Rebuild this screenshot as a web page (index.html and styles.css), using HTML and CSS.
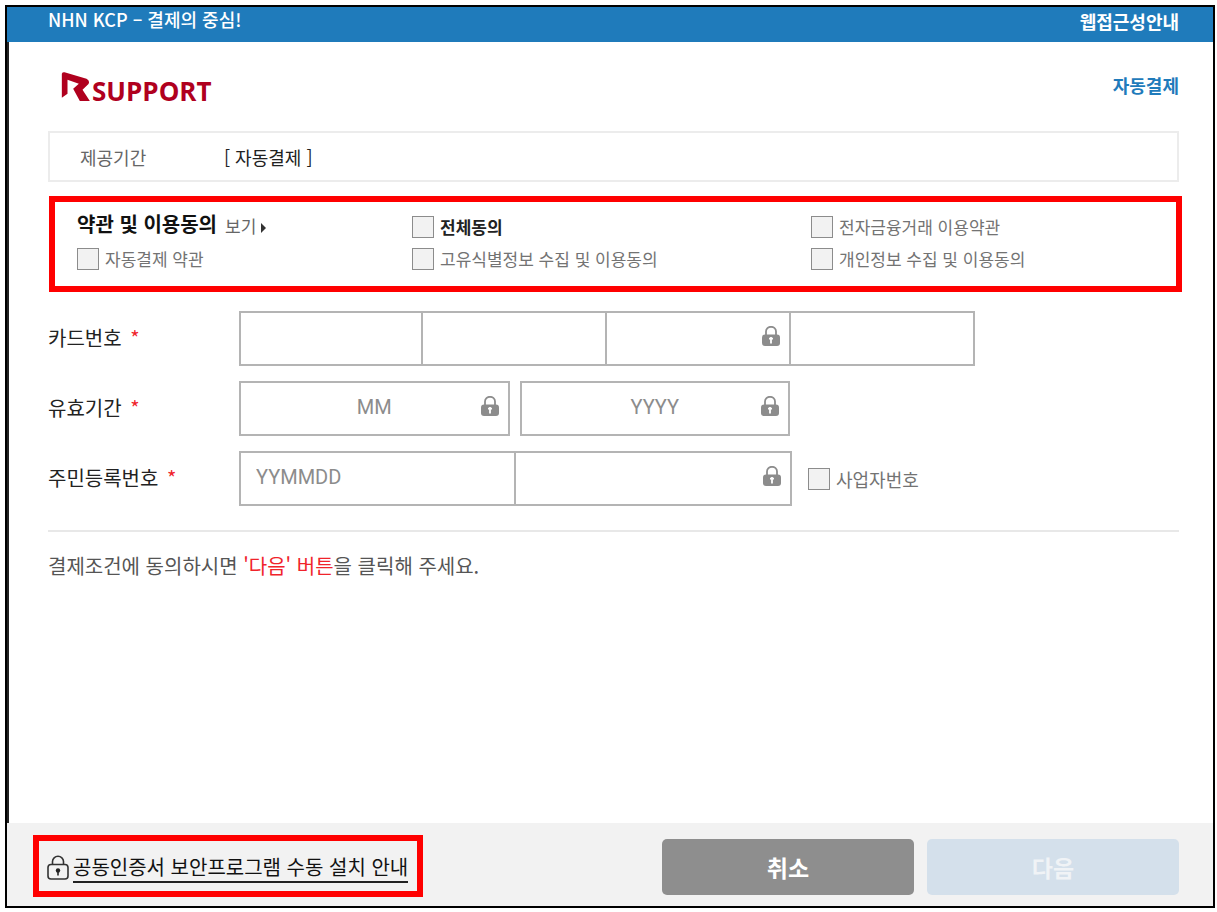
FILE: index.html
```html
<!DOCTYPE html>
<html lang="ko">
<head>
    <meta charset="UTF-8">
    <meta name="viewport" content="width=device-width, initial-scale=1.0">
    <title>NHN KCP - 결제의 중심!</title>
    <link rel="stylesheet" href="styles.css">
</head>
<body>
    <!-- Shared lock icon -->
    <svg class="sprite" aria-hidden="true">
        <symbol id="lock" viewBox="0 0 18 20">
            <path d="M4 10V5.5a5 4.7 0 0 1 10 0V10" fill="none" stroke="#8c8c8c" stroke-width="1.8"/>
            <rect x="0" y="8.5" width="18" height="11.5" rx="3" fill="#8c8c8c"/>
            <path d="M9 11v6.5M7 12.6h4" stroke="#fff" stroke-width="1.8"/>
        </symbol>
    </svg>

    <div class="window">
        <header class="topbar">
            <span class="brand">NHN KCP – 결제의 중심!</span>
            <a href="#" class="guide">웹접근성안내</a>
        </header>

        <main class="content">
            <div class="shop">
                <div class="logo">
                    <svg class="logo-mark" viewBox="0 0 86 87" aria-hidden="true">
                        <path d="M2 5Q4 0 10 1L76 20Q87 26 82 36L64 53L86 87H56L36 50L53 35L19 23V65L2 77Z" fill="#b0001e"/>
                    </svg>
                    <span>SUPPORT</span>
                </div>
                <strong class="pay-type">자동결제</strong>
            </div>

            <dl class="period">
                <dt>제공기간</dt>
                <dd>[ 자동결제 ]</dd>
            </dl>

            <form id="pay-form">
                <section class="terms">
                    <div class="terms-title">
                        <h2>약관 및 이용동의</h2>
                        <a href="#">보기<span class="arrow"></span></a>
                    </div>
                    <label class="check all"><input type="checkbox">전체동의</label>
                    <label class="check"><input type="checkbox">전자금융거래 이용약관</label>
                    <label class="check"><input type="checkbox">자동결제 약관</label>
                    <label class="check"><input type="checkbox">고유식별정보 수집 및 이용동의</label>
                    <label class="check"><input type="checkbox">개인정보 수집 및 이용동의</label>
                </section>

                <div class="row">
                    <label class="name" for="card1">카드번호 <em>*</em></label>
                    <div class="fields joined card">
                        <div class="field"><input type="text" id="card1"></div>
                        <div class="field"><input type="text" aria-label="카드번호 2"></div>
                        <div class="field">
                            <input type="password" aria-label="카드번호 3">
                            <svg class="lock"><use href="#lock"/></svg>
                        </div>
                        <div class="field"><input type="text" aria-label="카드번호 4"></div>
                    </div>
                </div>

                <div class="row">
                    <label class="name" for="month">유효기간 <em>*</em></label>
                    <div class="fields expiry">
                        <div class="field">
                            <input type="text" id="month" placeholder="MM">
                            <svg class="lock"><use href="#lock"/></svg>
                        </div>
                        <div class="field">
                            <input type="text" placeholder="YYYY" aria-label="유효기간 년">
                            <svg class="lock"><use href="#lock"/></svg>
                        </div>
                    </div>
                </div>

                <div class="row">
                    <label class="name" for="birth">주민등록번호 <em>*</em></label>
                    <div class="fields joined jumin">
                        <div class="field"><input type="text" id="birth" placeholder="YYMMDD"></div>
                        <div class="field">
                            <input type="password" aria-label="주민등록번호 뒷자리">
                            <svg class="lock"><use href="#lock"/></svg>
                        </div>
                    </div>
                    <label class="check biz"><input type="checkbox">사업자번호</label>
                </div>
            </form>

            <p class="notice">결제조건에 동의하시면 <em>'다음' 버튼</em>을 클릭해 주세요.</p>
        </main>

        <footer class="bottom">
            <div class="install">
                <svg class="install-lock" viewBox="0 0 22 26" aria-hidden="true">
                    <path d="M5.5 9.5V6.5a5.500 5.200 0 0 1 11 0v3" fill="none" stroke="#333" stroke-width="1.6"/>
                    <rect x="1" y="9.5" width="20" height="14.5" rx="3" fill="none" stroke="#333" stroke-width="1.6"/>
                    <circle cx="11" cy="15.500" r="2.200" fill="#222"/>
                    <path d="M11 15v5.500" stroke="#222" stroke-width="1.6"/>
                </svg>
                <a href="#">공동인증서 보안프로그램 수동 설치 안내</a>
            </div>
            <div class="buttons">
                <button type="button" class="cancel">취소</button>
                <button type="submit" form="pay-form" class="next" disabled>다음</button>
            </div>
        </footer>
    </div>
</body>
</html>
```
FILE: styles.css
```css
* {
    box-sizing: border-box;
}

body {
    margin: 0;
    padding: 5px 2px 4px 5px;
    min-height: 100vh;
    display: flex;
    background: #fff;
    color: #222;
    font-family: "Noto Sans CJK KR", sans-serif;
    font-size: 20px;
    line-height: 32px;
}

a {
    color: inherit;
    text-decoration: none;
}

em {
    font-style: normal;
    color: #f0232b;
}

input,
button {
    font-family: inherit;
}

.sprite {
    position: absolute;
    width: 0;
    height: 0;
}

.window {
    flex: 1;
    min-width: 0;
    display: flex;
    flex-direction: column;
    border: 2px solid #000;
}

/* Top */
.topbar {
    display: flex;
    justify-content: space-between;
    height: 35px;
    padding: 0 34px 0 41px;
    background: #1f7bbb;
    color: #fff;
    font-size: 18px;
    line-height: 24px;
}

.brand {
    font-weight: 500;
}

.guide {
    font-weight: 700;
    line-height: 28px;
}

.content {
    flex: 1;
    padding: 24px 34px 0 39px;
    border-left: 2px solid #222;
}

.shop {
    display: flex;
    justify-content: space-between;
    height: 65px;
    padding-left: 13px;
}

.logo {
    display: flex;
    align-items: flex-start;
    padding-top: 6px;
    color: #b0001e;
    font: 700 26px/38px "Open Sans", sans-serif;
}

.logo-mark {
    width: 29px;
    height: 29px;
    margin-right: 2px;
}

.pay-type {
    padding-top: 3px;
    color: #1f7bbb;
    font-size: 18px;
    font-weight: 700;
}

.period {
    display: flex;
    align-items: center;
    height: 51px;
    margin: 0 0 14px;
    padding-left: 30px;
    border: 2px solid #ececec;
    font-size: 18px;
}

.period dt {
    width: 144px;
    color: #666;
}

.period dd {
    margin: 0;
}

/* Terms */
.terms {
    display: grid;
    grid-template-columns: 335fr 399fr 365fr;
    grid-auto-rows: 32px;
    margin: 0 -3px 19px 1px;
    padding: 9px 0 11px 22px;
    border: 6px solid #f00;
}

.terms-title {
    display: flex;
    gap: 8px;
}

.terms-title h2 {
    margin: 0;
    color: #111;
    font-size: 20px;
    line-height: 26px;
    font-weight: 700;
}

.terms-title a {
    color: #666;
    font-size: 17px;
    line-height: 30px;
}

.arrow {
    display: inline-block;
    margin-left: 5px;
    border: 5px solid transparent;
    border-left: 5px solid #333;
    border-right: 0;
}

.check {
    display: flex;
    align-items: center;
    gap: 6px;
    color: #737373;
    font-size: 17px;
}

.check input {
    appearance: none;
    flex: none;
    width: 22px;
    height: 22px;
    margin: 0;
    border: 1px solid #8c8c8c;
    background: #f2f2f2;
}

.check input:checked {
    background: #1f7bbb;
}

.check.all {
    color: #222;
    font-weight: 700;
}

/* Form rows */
.row {
    display: flex;
    align-items: center;
    margin-bottom: 15px;
}

.name {
    flex: none;
    width: 191px;
    padding-bottom: 2px;
}

.name em {
    margin-left: 3px;
}

.fields {
    display: flex;
    width: 100%;
}

.card {
    max-width: 736px;
}

.expiry {
    gap: 10px;
    max-width: 551px;
}

.jumin {
    max-width: 553px;
}

.field {
    position: relative;
    flex: 1;
    min-width: 0;
}

.field input {
    display: block;
    width: 100%;
    height: 55px;
    padding: 0 15px 4px;
    border: 2px solid #b4b4b4;
    border-radius: 0;
    background: #fff;
    font-family: Roboto, "Noto Sans CJK KR", sans-serif;
    font-size: 20px;
}

.field input::placeholder {
    color: #8c8c8c;
    opacity: 1;
}

.joined .field + .field input {
    border-left: 0;
}

.expiry input {
    text-align: center;
}

.lock {
    position: absolute;
    top: 15px;
    right: 11px;
    width: 18px;
    height: 20px;
}

.biz {
    flex: none;
    margin-left: 16px;
    font-size: 18px;
}

.notice {
    margin: 24px 0;
    padding-top: 18px;
    border-top: 2px solid #e8e8e8;
    color: #555;
}

/* Bottom */
.bottom {
    display: flex;
    justify-content: space-between;
    padding: 12px 34px 9px 26px;
    background: #f2f2f2;
}

.install {
    display: flex;
    align-items: center;
    gap: 4px;
    padding: 3px 9px 0 8px;
    border: 6px solid #f00;
}

.install-lock {
    width: 22px;
    height: 26px;
}

.install a {
    border-bottom: 2px solid #222;
    color: #111;
    line-height: 28px;
}

.buttons {
    display: flex;
    gap: 13px;
    padding: 4px 0 2px;
}

.buttons button {
    width: 252px;
    height: 56px;
    padding: 0;
    border: 0;
    border-radius: 5px;
    color: #fff;
    font-size: 23px;
    font-weight: 700;
}

.cancel {
    background: #8e8e8e;
}

.buttons .next {
    background: #d4e0eb;
    color: #f0f3f6;
}
```
